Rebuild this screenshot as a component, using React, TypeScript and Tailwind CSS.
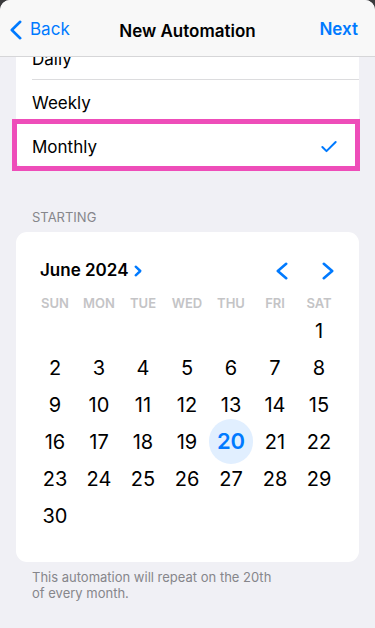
import { Check } from "lucide-react";

const weekdays = ["SUN", "MON", "TUE", "WED", "THU", "FRI", "SAT"];

// June 2024 starts on a Saturday
const cells: (number | null)[] = [
  null, null, null, null, null, null,
  ...Array.from({ length: 30 }, (_, i) => i + 1),
];

const selectedDay = 20;

function Chevron({ dir, w, h, stroke }: { dir: "left" | "right"; w: number; h: number; stroke: number }) {
  const s = stroke / 2 + 0.5;
  const pts =
    dir === "left"
      ? `${w - s},${s} ${s},${h / 2} ${w - s},${h - s}`
      : `${s},${s} ${w - s},${h / 2} ${s},${h - s}`;
  return (
    <svg width={w} height={h} viewBox={`0 0 ${w} ${h}`} fill="none">
      <polyline points={pts} stroke="currentColor" strokeWidth={stroke} strokeLinecap="round" strokeLinejoin="round" />
    </svg>
  );
}

function Row({ label, last, checked }: { label: string; last?: boolean; checked?: boolean }) {
  return (
    <div className="relative h-[44px] pl-[16px]">
      <div className={`flex h-full items-center pt-[4px] pr-[20px] ${last ? "" : "border-b border-[#dcdcde]"}`}>
        <span className="flex-1 text-[17px] text-black">{label}</span>
        {checked && <Check size={20} strokeWidth={2.4} className="-mt-[2px] text-[#007aff]" />}
      </div>
    </div>
  );
}

export default function App() {
  return (
    <div className="bg-[#3a3a3c] min-h-[628px]" style={{ fontFamily: "Inter, 'Noto Sans', sans-serif" }}>
      <div className="relative h-[628px] overflow-hidden rounded-t-[10px] bg-[#f0f0f5]">
        {/* Nav bar overlays the scrolled list */}
        <header className="absolute inset-x-0 top-0 z-10 flex h-[57px] items-center border-b border-[#d6d6d8] bg-[#f8f8f8] pt-[4px]">
          <button className="flex items-center gap-[8px] pl-[10px] text-[#007aff]">
            <Chevron dir="left" w={12} h={20} stroke={2.6} />
            <span className="text-[17px]">Back</span>
          </button>
          <h1 className="absolute left-1/2 top-[4px] flex h-full -translate-x-1/2 items-center text-[17px] font-semibold text-black">
            New Automation
          </h1>
          <button className="ml-auto pr-[17px] text-[17px] font-semibold text-[#007aff]">Next</button>
        </header>

        <main className="px-[16px] pt-[36px]">
          <div className="relative rounded-b-[10px] bg-white">
            <Row label="Daily" />
            <Row label="Weekly" />
            <div className="relative">
              <Row label="Monthly" last checked />
              {/* highlight marker */}
              <div className="pointer-events-none absolute -top-[5px] -bottom-[3px] -left-[4px] -right-[1px] border-[5px] border-[#ee4db9]" />
            </div>
          </div>

          <p className="mt-[41px] pl-[16px] text-[13px] leading-[16px] text-[#86868b]">STARTING</p>

          <section className="mt-[7px] rounded-[11px] bg-white pt-[16px] pb-[28px]">
            <div className="flex h-[45px] items-center pl-[24px] pr-[17px]">
              <span className="text-[17px] font-semibold text-black">June 2024</span>
              <span className="ml-[6px] text-[#007aff]">
                <Chevron dir="right" w={8} h={12} stroke={2.4} />
              </span>
              <div className="ml-auto flex gap-[18px] text-[#007aff]">
                <button className="flex w-[28px] justify-center">
                  <Chevron dir="left" w={12} h={18} stroke={2.6} />
                </button>
                <button className="flex w-[28px] justify-center">
                  <Chevron dir="right" w={12} h={18} stroke={2.6} />
                </button>
              </div>
            </div>

            <div className="grid grid-cols-7 pl-[17px] pr-[18px]">
              {weekdays.map((d) => (
                <div key={d} className="flex h-[19px] items-center justify-center pt-[3px] text-[13px] font-semibold text-[#c4c4c6]">
                  {d}
                </div>
              ))}
              {cells.map((n, i) => (
                <div key={i} className="flex h-[37px] items-center justify-center">
                  {n === selectedDay ? (
                    <span className="flex h-[45px] w-[45px] items-center justify-center rounded-full bg-[#e1efff] text-[22px] font-semibold text-[#007aff]">
                      {n}
                    </span>
                  ) : (
                    <span className="text-[20px] text-black">{n ?? ""}</span>
                  )}
                </div>
              ))}
            </div>
          </section>

          <p className="mt-[7px] pl-[16px] text-[13px] leading-[16px] text-[#86868b]">
            This automation will repeat on the 20th
            <br />
            of every month.
          </p>
        </main>
      </div>
    </div>
  );
}
